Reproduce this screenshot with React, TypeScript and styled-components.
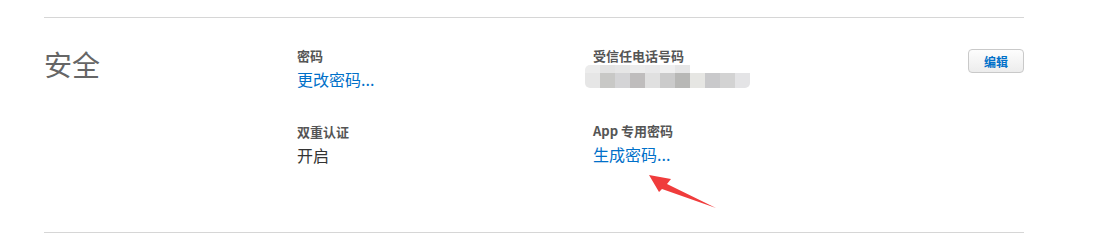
import React from 'react'
import styled, { createGlobalStyle } from 'styled-components'

const GlobalStyle = createGlobalStyle`
  body {
    margin: 0;
    background: #fff;
    font-family: "Noto Sans CJK SC", "Liberation Sans", sans-serif;
  }
`

const Page = styled.div`
  position: relative;
  width: 1094px;
  height: 247px;
  padding: 17px 0 0 44px;
  box-sizing: border-box;
`

const Section = styled.section`
  width: 980px;
  height: 216px;
  box-sizing: border-box;
  border-top: 1px solid #d6d6d6;
  border-bottom: 1px solid #d6d6d6;
  display: grid;
  grid-template-columns: 253px 296px 1fr 56px;
  padding-top: 29px;
`

const Title = styled.h2`
  margin: 0;
  font-size: 28px;
  line-height: 34px;
  font-weight: 400;
  color: #666;
`

const Column = styled.div`
  display: flex;
  flex-direction: column;
  gap: 34px;
`

const Field = styled.div`
  display: flex;
  flex-direction: column;
`

const Label = styled.div`
  font-size: 13px;
  line-height: 18px;
  font-weight: 700;
  color: #555;
`

const Value = styled.div<{ $link?: boolean }>`
  margin-top: 4px;
  font-size: 16px;
  line-height: 20px;
  color: ${({ $link }) => ($link ? '#0070c9' : '#333')};
  cursor: ${({ $link }) => ($link ? 'pointer' : 'default')};
`

const Blurred = styled.div`
  margin-left: -8px;
  width: 165px;
  display: flex;
  flex-direction: column;
  filter: blur(0.6px);
  border-radius: 5px;
  overflow: hidden;
`

const BlurRow = styled.div<{ $h: number }>`
  display: flex;
  height: ${({ $h }) => $h}px;
`

const Cell = styled.span<{ $shade: string }>`
  width: 15px;
  height: 100%;
  background: ${({ $shade }) => $shade};
`

const EditButton = styled.button`
  margin-top: 2px;
  width: 56px;
  height: 24px;
  border: 1px solid #c9c9c9;
  border-radius: 4px;
  background: linear-gradient(#fdfdfd, #ececec);
  color: #0070c9;
  font-family: inherit;
  font-size: 12px;
  font-weight: 700;
  padding: 0;
  cursor: pointer;
`

const Arrow = styled.svg`
  position: absolute;
  left: 640px;
  top: 165px;
`

const topShades = ['#ececec', '#e3e3e3', '#e6e6e6', '#ececec', '#e9e9ea', '#f0f0f0', '#e6e6e6']
const bottomShades = [
  '#e6e6e6', '#c8c8c6', '#d4d4d6', '#bfbdbd', '#e0e0e0', '#cbcbcb',
  '#b8b8b6', '#e6e6e3', '#c9c9cb', '#d3d3d3', '#e4e4e6',
]

export default function App() {
  return (
    <Page>
      <GlobalStyle />
      <Section>
        <Title>安全</Title>
        <Column>
          <Field>
            <Label>密码</Label>
            <Value $link>更改密码...</Value>
          </Field>
          <Field>
            <Label>双重认证</Label>
            <Value>开启</Value>
          </Field>
        </Column>
        <Column>
          <Field>
            <Label>受信任电话号码</Label>
            <Blurred>
              <BlurRow $h={8}>
                {topShades.map((s, i) => <Cell key={i} $shade={s} />)}
              </BlurRow>
              <BlurRow $h={15}>
                {bottomShades.map((s, i) => <Cell key={i} $shade={s} />)}
              </BlurRow>
            </Blurred>
          </Field>
          <Field>
            <Label>App 专用密码</Label>
            <Value $link>生成密码...</Value>
          </Field>
        </Column>
        <div>
          <EditButton>编辑</EditButton>
        </div>
      </Section>
      <Arrow width="80" height="50" viewBox="0 0 80 50">
        <polygon points="9,10 31,14 27,19 76,43 22,24 19,27" fill="#f03c3c" />
      </Arrow>
    </Page>
  )
}
